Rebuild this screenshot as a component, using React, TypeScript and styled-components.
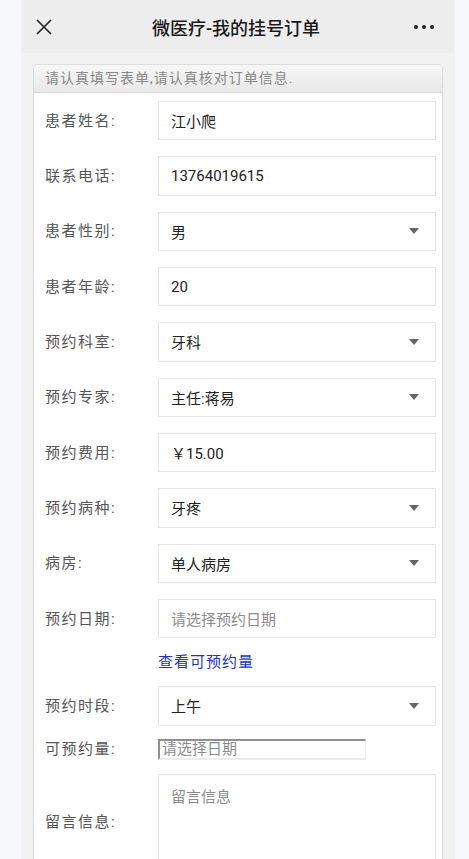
import styled, { createGlobalStyle } from "styled-components";

const GlobalStyle = createGlobalStyle`
  html, body {
    margin: 0;
    padding: 0;
    background: #f7f8fc;
  }
  body {
    font-family: Roboto, "Noto Sans CJK SC", "Noto Sans", sans-serif;
  }
  * {
    box-sizing: border-box;
  }
`;

const rows = [
  { label: "患者姓名:", value: "江小爬" },
  { label: "联系电话:", value: "13764019615" },
  { label: "患者性别:", value: "男", select: true },
  { label: "患者年龄:", value: "20" },
  { label: "预约科室:", value: "牙科", select: true },
  { label: "预约专家:", value: "主任:蒋易", select: true },
  { label: "预约费用:", value: "￥15.00" },
  { label: "预约病种:", value: "牙疼", select: true },
  { label: "病房:", value: "单人病房", select: true },
  { label: "预约日期:", placeholder: "请选择预约日期" },
];

const App = () => {
  return (
    <>
      <GlobalStyle />
      <Frame>
        <NavBar>
          <CloseButton>
            <svg width="16" height="16" viewBox="0 0 16 16">
              <path
                d="M1 1 L15 15 M15 1 L1 15"
                stroke="#222"
                strokeWidth="1.6"
                fill="none"
              />
            </svg>
          </CloseButton>
          <Title>微医疗-我的挂号订单</Title>
          <More>
            <Dot />
            <Dot />
            <Dot />
          </More>
        </NavBar>

        <Panel>
          <PanelHeader>请认真填写表单,请认真核对订单信息.</PanelHeader>
          <PanelBody>
            {rows.map((row, i) => (
              <Row key={row.label} $mt={i === 0 ? 0 : 16}>
                <Label>{row.label}</Label>
                <Field>
                  {row.value ? (
                    <Value>{row.value}</Value>
                  ) : (
                    <Placeholder>{row.placeholder}</Placeholder>
                  )}
                  {row.select && <Caret />}
                </Field>
              </Row>
            ))}

            <LinkRow>
              <span />
              <Link>查看可预约量</Link>
            </LinkRow>

            <Row $mt={16}>
              <Label>预约时段:</Label>
              <Field>
                <Value>上午</Value>
                <Caret />
              </Field>
            </Row>

            <Row $mt={13}>
              <Label $lh={21}>可预约量:</Label>
              <SmallInput>请选择日期</SmallInput>
            </Row>

            <Row $mt={14}>
              <Label>留言信息:</Label>
              <TextArea>
                <Placeholder>留言信息</Placeholder>
              </TextArea>
            </Row>
          </PanelBody>
        </Panel>
      </Frame>
    </>
  );
};
export default App;

const Frame = styled.div`
  width: 432px;
  min-height: 900px;
  margin-left: 22px;
  background: #f2f2f2;
  box-shadow: 0 0 1px rgba(0, 0, 0, 0.12);
`;

const NavBar = styled.div`
  display: grid;
  grid-template-columns: 56px 1fr 60px;
  align-items: center;
  height: 53px;
  background: #ededed;
`;

const CloseButton = styled.div`
  display: flex;
  align-items: center;
  padding-left: 14px;
  padding-top: 1px;
`;

const Title = styled.div`
  text-align: center;
  font-size: 18px;
  font-weight: 500;
  color: #1a1a1a;
`;

const More = styled.div`
  display: flex;
  justify-content: flex-end;
  gap: 4px;
  padding-right: 20px;
`;

const Dot = styled.span`
  width: 4px;
  height: 4px;
  border-radius: 50%;
  background: #222;
`;

const Panel = styled.div`
  margin: 11px 11px 0;
  border: 1px solid #dcdcdc;
  border-radius: 5px 5px 0 0;
  box-shadow: 0 1px 2px rgba(0, 0, 0, 0.06);
  overflow: hidden;
`;

const PanelHeader = styled.div`
  height: 28px;
  line-height: 27px;
  padding-left: 11px;
  background: linear-gradient(#f7f7f7, #e8e8e8);
  border-bottom: 1px solid #d6d6d6;
  font-size: 14px;
  letter-spacing: 1px;
  color: #888;
`;

const PanelBody = styled.div`
  background: #fff;
  padding: 8px 6px 40px 11px;
`;

const Row = styled.div<{ $mt: number }>`
  display: grid;
  grid-template-columns: 113px 1fr;
  align-items: center;
  margin-top: ${(p) => p.$mt}px;
`;

const Label = styled.div<{ $lh?: number }>`
  font-size: 15px;
  line-height: ${(p) => p.$lh ?? 22}px;
  letter-spacing: 1.5px;
  color: #555;
`;

const Field = styled.div`
  display: flex;
  align-items: center;
  justify-content: space-between;
  height: 39.33px;
  padding: 0 16px 0 12px;
  border: 1px solid #e6e6e6;
  background: #fff;
  font-size: 15px;
`;

const Value = styled.span`
  color: #222;
`;

const Placeholder = styled.span`
  color: #8c8c8c;
`;

const Caret = styled.span`
  width: 0;
  height: 0;
  border-left: 5.5px solid transparent;
  border-right: 5.5px solid transparent;
  border-top: 6px solid #666;
`;

const LinkRow = styled.div`
  display: grid;
  grid-template-columns: 113px 1fr;
  margin-top: 16px;
  height: 16px;
  align-items: center;
`;

const Link = styled.a`
  font-size: 15px;
  line-height: 16px;
  letter-spacing: 1px;
  color: #2233c4;
  text-decoration: none;
`;

const SmallInput = styled.div`
  width: 208px;
  height: 21px;
  padding: 0 2px;
  border-style: solid;
  border-width: 2px 1px 2px 2px;
  border-color: #8f8f8f #ececec #ececec #8f8f8f;
  font-size: 15px;
  line-height: 17px;
  color: #8c8c8c;
`;

const TextArea = styled.div`
  height: 96px;
  padding: 12px 12px;
  border: 1px solid #e6e6e6;
  font-size: 15px;
  line-height: 20px;
`;
